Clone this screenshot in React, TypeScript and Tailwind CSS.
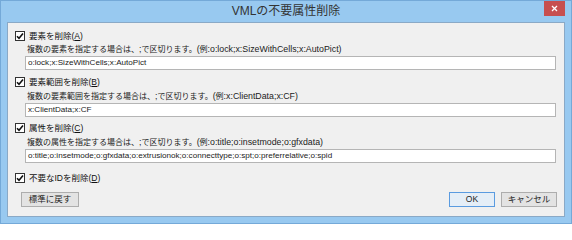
import React, { useState } from 'react';

const font = "font-['Liberation_Sans','Noto_Sans_CJK_JP',sans-serif]";

const Check: React.FC<{ checked: boolean; onToggle: () => void; label: string; accel: string }> = ({ checked, onToggle, label, accel }) => (
  <label className="flex items-center h-[12px] cursor-default" onClick={onToggle}>
    <span className="w-[10px] h-[10px] border border-[#333] bg-white flex items-center justify-center ml-[1px]">
      {checked && (
        <svg width="8" height="8" viewBox="0 0 8 8">
          <path d="M1 4.2 L3 6.2 L7 1.5" stroke="#111" strokeWidth="1.6" fill="none" />
        </svg>
      )}
    </span>
    <span className="ml-[4px] text-[8.5px] text-[#111] leading-none">
      {label}(<span className="underline">{accel}</span>)
    </span>
  </label>
);

const Field: React.FC<{ value: string }> = ({ value }) => (
  <div className="ml-[11px] mr-[1px] h-[14px] border border-[#b5b5b5] bg-white flex items-center px-[2px] text-[8.1px] text-[#222] leading-none whitespace-nowrap overflow-hidden">
    {value}
  </div>
);

// latin runs are set a touch larger than the kana/kanji, like the original UI font
const Hint: React.FC<{ text: string }> = ({ text }) => (
  <div className="ml-[13px] text-[8px] text-[#222] leading-none h-[12px] flex items-center whitespace-nowrap">
    <span>
      {text.split(/([\x20-\x7e]+)/).map((part, i) =>
        i % 2 ? (
          <span key={i} className="text-[8.8px]">{part}</span>
        ) : (
          <span key={i}>{part}</span>
        )
      )}
    </span>
  </div>
);

export default function App() {
  const [c, setC] = useState([true, true, true, true]);
  const flip = (i: number) => setC(c.map((v, j) => (j === i ? !v : v)));

  return (
    <div className={`w-[572px] h-[224px] bg-[#98c9f0] border border-[#74a9d8] flex flex-col ${font}`}>
      <div className="h-[21px] flex items-start relative">
        <div className="flex-1 text-center text-[12px] text-[#333] pt-[4px] leading-none">VMLの不要属性削除</div>
        <div className="absolute right-[6px] top-0 w-[21px] h-[15px] bg-[#c74f4f] flex items-center justify-center">
          <svg width="7" height="7" viewBox="0 0 7 7">
            <path d="M1 1 L6 6 M6 1 L1 6" stroke="#fff" strokeWidth="1.3" />
          </svg>
        </div>
      </div>
      <div className="mx-[6px] mb-[6px] flex-1 bg-[#f0f0f0] border border-[#8aa9c6] pl-[6px] pr-[7px] pt-[7px] flex flex-col">
        <Check checked={c[0]} onToggle={() => flip(0)} label="要素を削除" accel="A" />
        <div className="h-[1px]" />
        <Hint text="複数の要素を指定する場合は、;で区切ります。(例:o:lock;x:SizeWithCells;x:AutoPict)" />
        <div className="h-[1px]" />
        <Field value="o:lock;x:SizeWithCells;x:AutoPict" />
        <div className="h-[6px]" />
        <Check checked={c[1]} onToggle={() => flip(1)} label="要素範囲を削除" accel="B" />
        <div className="h-[2px]" />
        <Hint text="複数の要素範囲を指定する場合は、;で区切ります。(例:x:ClientData;x:CF)" />
        <div className="h-[1px]" />
        <Field value="x:ClientData;x:CF" />
        <div className="h-[5px]" />
        <Check checked={c[2]} onToggle={() => flip(2)} label="属性を削除" accel="C" />
        <div className="h-[2px]" />
        <Hint text="複数の属性を指定する場合は、;で区切ります。(例:o:title;o:insetmode;o:gfxdata)" />
        <div className="h-[1px]" />
        <Field value="o:title;o:insetmode;o:gfxdata;o:extrusionok;o:connecttype;o:spt;o:preferrelative;o:spid" />
        <div className="h-[9px]" />
        <Check checked={c[3]} onToggle={() => flip(3)} label="不要なIDを削除" accel="D" />
        <div className="flex items-center mt-[8px] ml-[7px]">
          <button className="w-[58px] h-[15px] bg-[#e3e3e3] border border-[#adadad] text-[8.5px] text-[#222] leading-none">標準に戻す</button>
          <div className="flex-1" />
          <button className="w-[46px] h-[15px] bg-[#e5eef7] border border-[#5a9be0] text-[8.5px] text-[#222] leading-none">OK</button>
          <button className="ml-[6px] w-[56px] h-[15px] bg-[#e3e3e3] border border-[#adadad] text-[8.5px] text-[#222] leading-none">キャンセル</button>
        </div>
      </div>
    </div>
  );
}
